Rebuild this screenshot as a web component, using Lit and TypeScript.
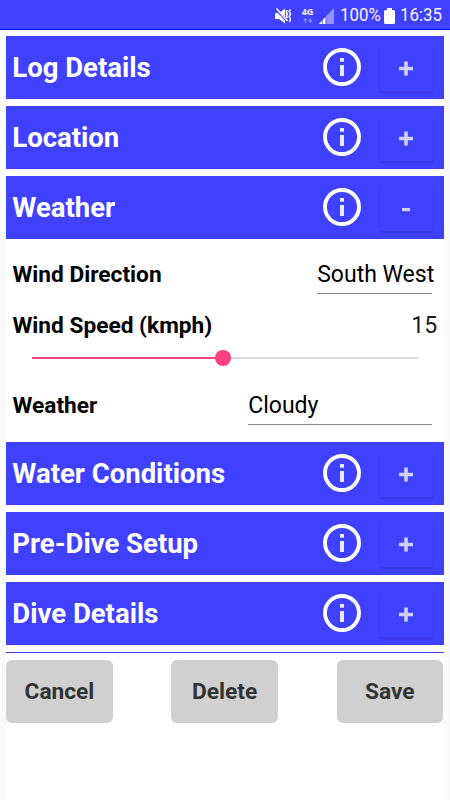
import { LitElement, html, css, svg } from "lit";
import { customElement, property, state } from "lit/decorators.js";

@customElement("status-bar")
class StatusBar extends LitElement {
  static styles = css`
    :host {
      display: block;
      height: 29px;
      background: #4040ff;
      border-bottom: 1px solid #0a0ae0;
      color: #f4f4ff;
    }
    .row {
      display: flex;
      align-items: center;
      justify-content: flex-end;
      height: 31px;
      padding-right: 8px;
      font: 400 18.5px/31px Roboto, sans-serif;
    }
    svg { display: block; flex: none; }
    .mute { margin-right: 9px; }
    .net {
      display: flex;
      flex-direction: column;
      align-items: center;
      width: 13px;
      margin-right: 5px;
      font: 700 9px/8px "Open Sans", sans-serif;
    }
    .arrows { margin-top: 2px; }
    .signal { margin-right: 6px; }
    .pct { width: 40px; margin-right: 4px; white-space: nowrap; }
    .time { width: 42px; margin-left: 5px; white-space: nowrap; }
    .fit { display: inline-block; transform-origin: 0 50%; transform: scaleX(0.91); }
  `;
  render() {
    return html`<div class="row">
      <svg class="mute" width="17" height="16" viewBox="0 0 17 16">
        <path fill="#fff" d="M0 5h4l6-4.500v15L4 11H0z" />
        <path d="M.5.500l12 13" stroke="#4040ff" stroke-width="2.600" />
        <path d="M1.500.500l11 12.500" stroke="#fff" stroke-width="1.500" />
        <path d="M12.200 2l-1 2 1.300 2-1.300 2 1.300 2M15.500 1.500l-1.300 2 1.300 2.500-1.300 2.500 1.300 2.500-1 3" fill="none" stroke="#fff" stroke-width="1.500" />
      </svg>
      <div class="net">
        <span>4G</span>
        <svg class="arrows" width="10" height="5" viewBox="0 0 10 5">
          <path d="M2.500 5V1M.700 2.500L2.500.700l1.800 1.800M7.200 0v4M5.400 2.500l1.800 1.800L9 2.500" fill="none" stroke="#a7a7ff" />
        </svg>
      </div>
      <svg class="signal" width="15" height="16" viewBox="0 0 15 16">
        <path d="M0 16L15 0v16z" fill="#9595ff" />
        <path d="M0 16l6.500-7v7z" fill="#fff" />
        <path d="M3.500 11v5M7 7v9" stroke="#4040ff" stroke-width=".6" />
      </svg>
      <div class="pct"><span class="fit">100%</span></div>
      <svg width="11" height="16" viewBox="0 0 11 16"><path fill="#fff" d="M3 0h5v2h1.500Q11 2 11 3.500v11Q11 16 9.500 16h-8Q0 16 0 14.500v-11Q0 2 1.500 2H3z" /></svg>
      <div class="time"><span class="fit">16:35</span></div>
    </div>`;
  }
}

@customElement("section-header")
class SectionHeader extends LitElement {
  @property() label = "";
  @property({ type: Boolean }) open = false;

  static styles = css`
    :host {
      display: flex;
      align-items: center;
      box-sizing: border-box;
      height: 62.500px;
      padding: 0 11px 0 6px;
      background: #4040ff;
    }
    .title {
      flex: 1;
      padding-top: 2px;
      color: #fff;
      font: 700 27.500px/34px Roboto, sans-serif;
      white-space: nowrap;
    }
    .info { display: block; margin-right: 18.500px; }
    button {
      width: 53px;
      height: 46px;
      margin: 1px 0 0;
      padding: 1px 0 0;
      border: 0;
      border-radius: 2px;
      background: #4040ff;
      box-shadow: 0 2px 2px rgba(40, 40, 120, 0.25);
    }
    button svg { display: block; margin: 0 auto; }
  `;
  render() {
    return html`
      <div class="title">${this.label}</div>
      <svg class="info" width="38" height="38" viewBox="0 0 38 38">
        <circle cx="19" cy="19" r="17" fill="none" stroke="#fff" stroke-width="3.900" />
        <path d="M17 10h4v3.700h-4zM17 17h4v11h-4z" fill="#e8e8ff" />
      </svg>
      <button aria-label="Toggle ${this.label}">
        <svg width="14" height="15" viewBox="0 0 14 15">
          ${this.open
            ? svg`<path d="M3 7h8v3.200H3z" fill="#cfcfff" />`
            : svg`<path d="M5.200.500h3.600v5.300H14v3.500H8.800v5.200H5.200V9.300H0V5.800h5.200z" fill="#cfcfff" />`}
        </svg>
      </button>
    `;
  }
}

@customElement("app-root")
class AppRoot extends LitElement {
  @state() speed = 15;

  static styles = css`
    :host {
      display: block;
      height: 800px;
      overflow: hidden;
      background: #fafafa;
      color: #000;
      font: 400 23px/28px Roboto, sans-serif;
    }
    main {
      box-sizing: border-box;
      height: 770px;
      margin: 0 6.300px;
      background: #fff;
    }
    .list {
      display: flex;
      flex-direction: column;
      gap: 7.500px;
      border-top: 6.300px solid #fafafa;
    }
    .panel {
      box-sizing: border-box;
      height: 188.600px;
      padding: 14.500px 6.500px 0 6.200px;
    }
    .row { display: flex; justify-content: space-between; white-space: nowrap; }
    .label { font-weight: 700; font-size: 22.700px; }
    .field {
      box-sizing: border-box;
      height: 33px;
      margin-right: 5px;
      border-bottom: 1.300px solid #858585;
    }
    .direction { width: 115px; }
    .weather { width: 184px; }
    .speed { margin-top: 18.500px; }
    .value { color: #1c1c1c; }
    .track {
      display: flex;
      align-items: center;
      height: 16px;
      margin: 10px 19px 0 20px;
    }
    .done { height: 2.600px; background: #ff4081; }
    .thumb { width: 15.500px; height: 15.500px; margin: 0 -7.700px; border-radius: 50%; background: #ff4081; z-index: 1; }
    .rest { flex: 1; height: 2.600px; background: #dadada; }
    .sky { margin-top: 26px; }
    .actions {
      display: flex;
      justify-content: space-between;
      margin-top: 7.500px;
      padding: 7px 0.700px 0 0;
      border-top: 1px solid #4040ff;
    }
    .actions button {
      width: 106.400px;
      height: 62.700px;
      padding: 2px 0 0;
      border: 0;
      border-radius: 6px;
      background: #d0d0d0;
      color: #303333;
      font: 700 22.700px/28px Roboto, sans-serif;
    }
  `;
  render() {
    return html`
      <status-bar></status-bar>
      <main>
        <div class="list">
          <section-header label="Log Details"></section-header>
          <section-header label="Location"></section-header>
          <section-header label="Weather" open></section-header>
          <div class="panel">
            <div class="row">
              <span class="label">Wind Direction</span>
              <span class="field direction">South West</span>
            </div>
            <div class="row speed">
              <span class="label">Wind Speed (kmph)</span>
              <span class="value">${this.speed}</span>
            </div>
            <div class="track">
              <div class="done" style="width: ${(this.speed / 30.4) * 100}%"></div>
              <div class="thumb"></div>
              <div class="rest"></div>
            </div>
            <div class="row sky">
              <span class="label">Weather</span>
              <span class="field weather">Cloudy</span>
            </div>
          </div>
          <section-header label="Water Conditions"></section-header>
          <section-header label="Pre-Dive Setup"></section-header>
          <section-header label="Dive Details"></section-header>
        </div>
        <div class="actions">
          <button>Cancel</button>
          <button>Delete</button>
          <button>Save</button>
        </div>
      </main>
    `;
  }
}
